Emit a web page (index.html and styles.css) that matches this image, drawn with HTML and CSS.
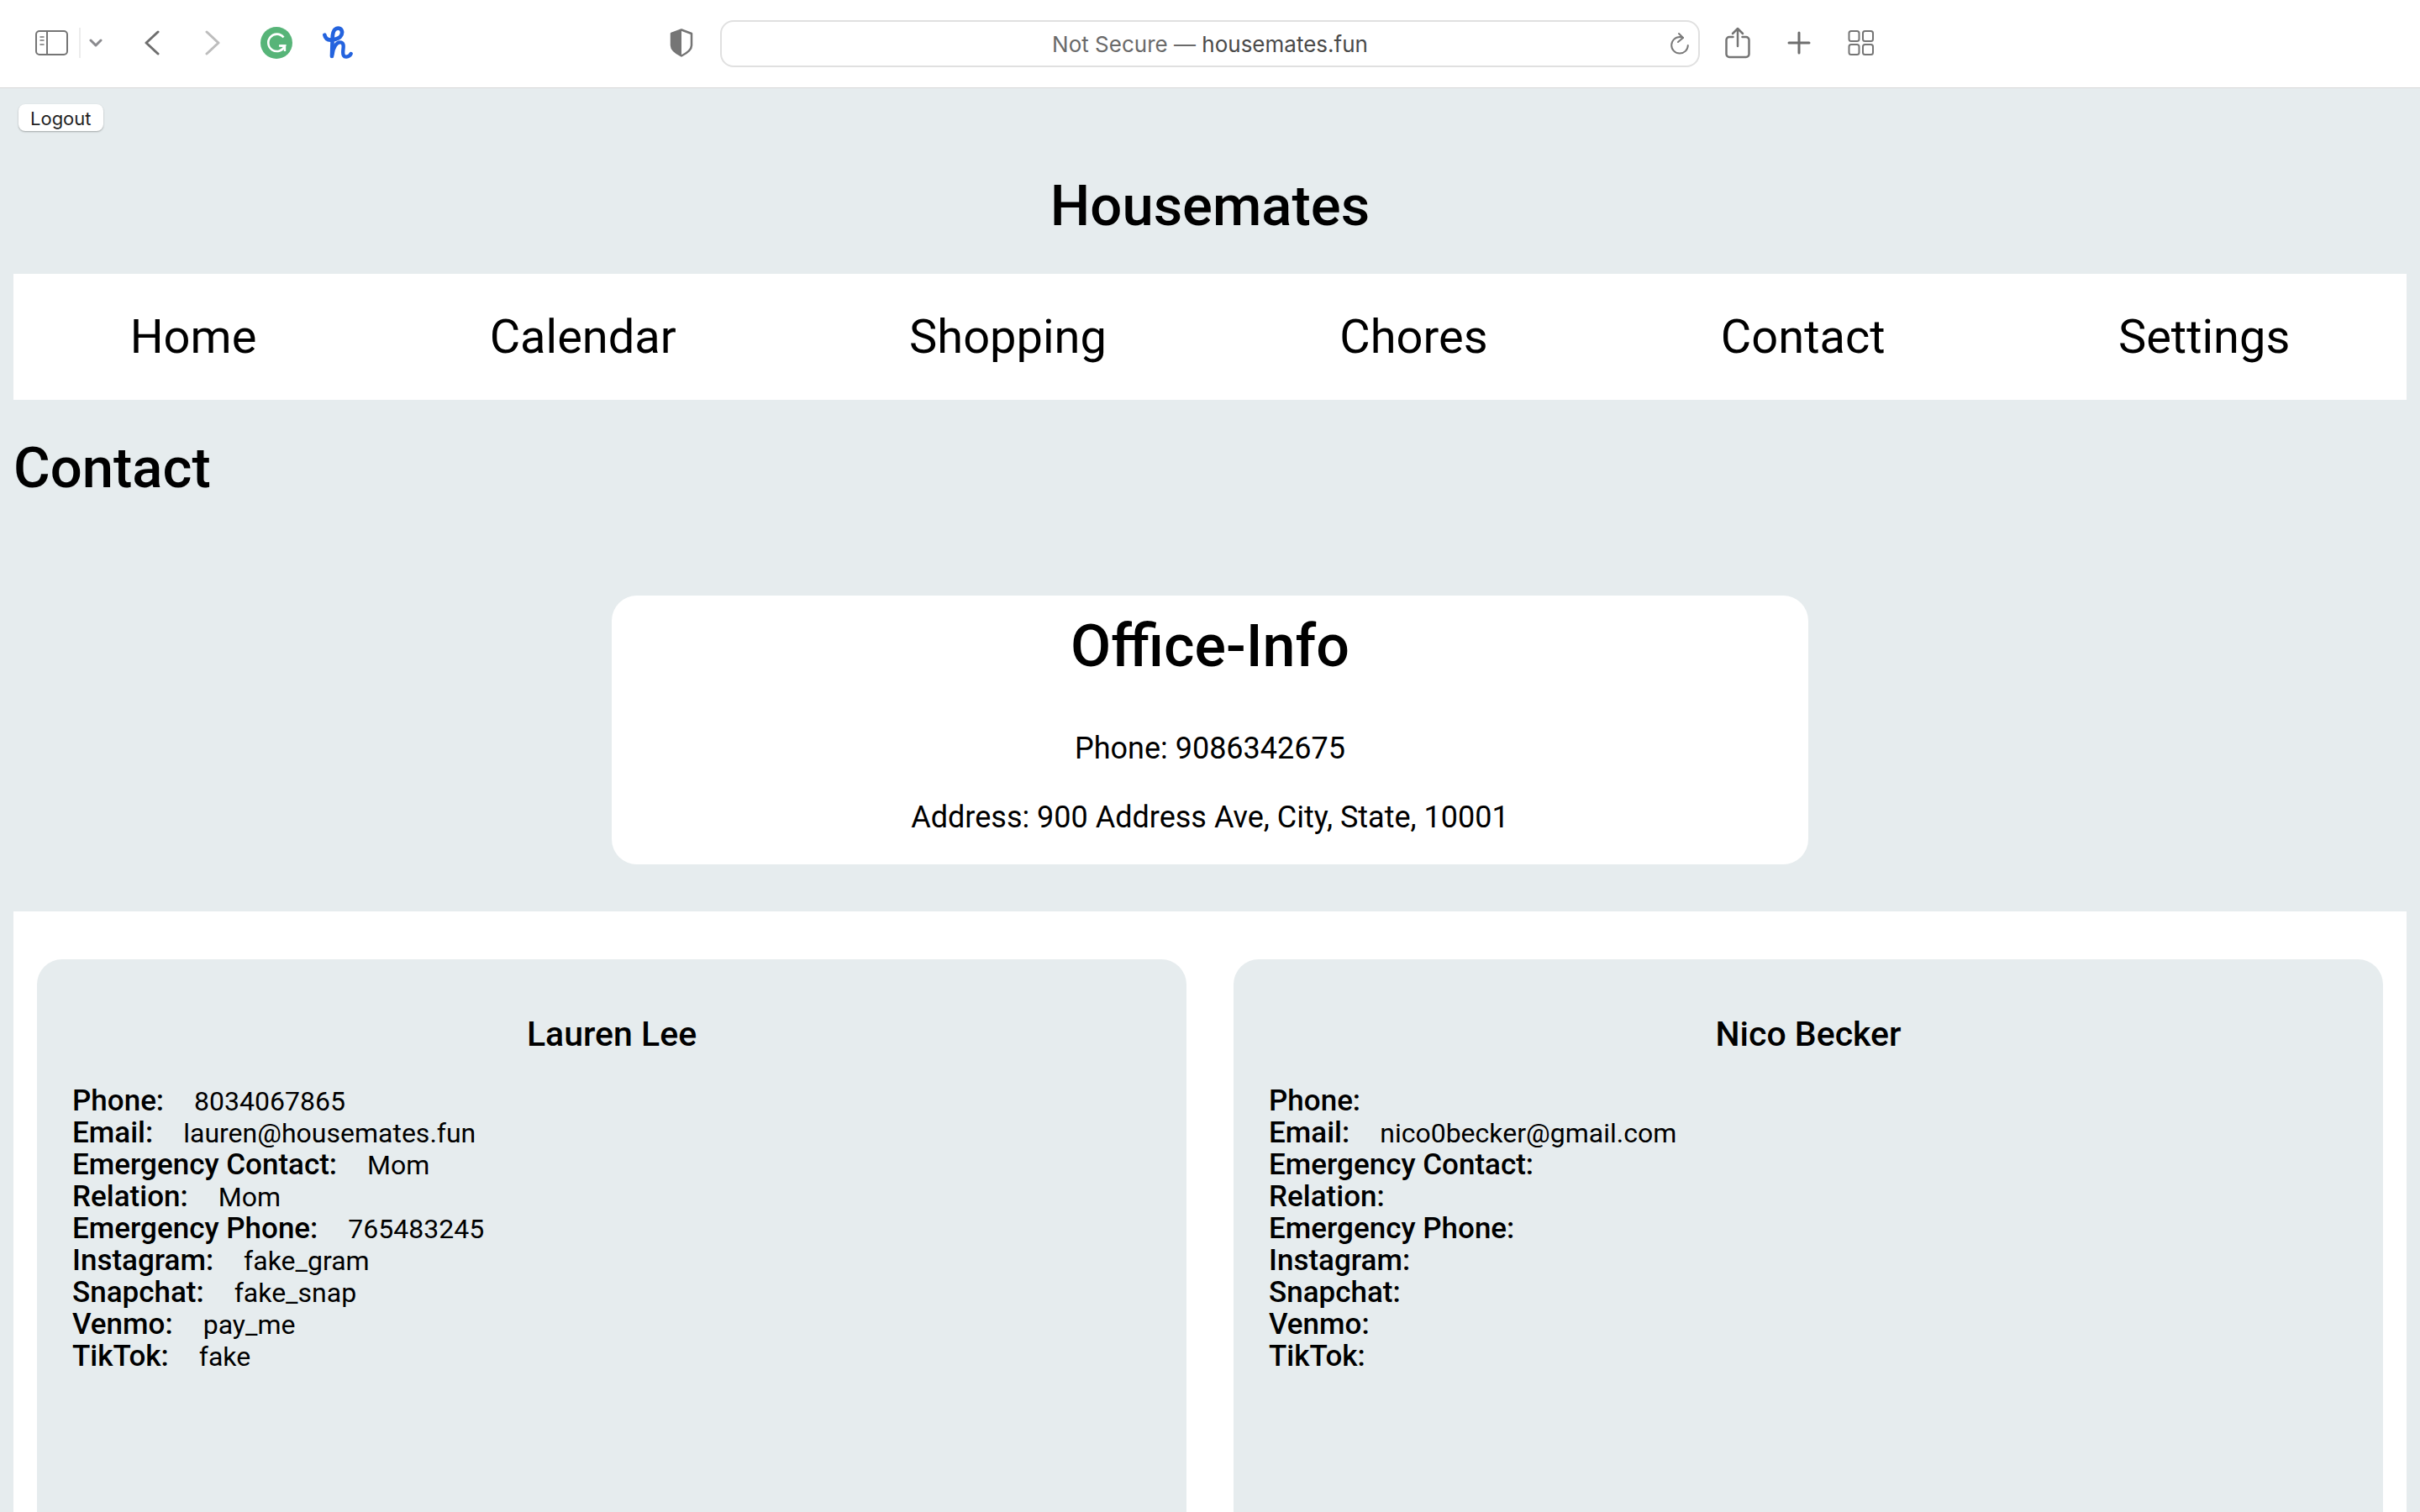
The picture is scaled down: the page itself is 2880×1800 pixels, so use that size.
FILE: index.html
```html
<!DOCTYPE html>
<html lang="en">
<head>
<meta charset="utf-8">
<title>Housemates</title>
<link rel="stylesheet" href="styles.css">
</head>
<body>
<div class="window">
  <div class="toolbar">
    <div class="toolbar-left">
      <button class="tool" type="button" aria-label="Sidebar">
        <svg width="40" height="32" viewBox="0 0 40 32" fill="none" stroke="#757575" stroke-width="2">
          <rect x="1" y="2" width="37" height="28" rx="4"/>
          <path d="M14 2v28"/>
          <path d="M6 9h4M6 13h4M6 18h4" stroke-linecap="round" stroke-width="1.5"/>
        </svg>
      </button>
      <span class="divider"></span>
      <button class="tool tool-menu" type="button" aria-label="Tab groups">
        <svg width="16" height="12" viewBox="0 0 16 12" fill="none" stroke="#8a8a8e" stroke-width="3" stroke-linecap="round" stroke-linejoin="round"><path d="M2 3l6 6 6-6"/></svg>
      </button>
      <button class="tool tool-back" type="button" aria-label="Back">
        <svg width="18" height="30" viewBox="0 0 18 30" fill="none" stroke="#6e6e6e" stroke-width="3" stroke-linecap="round" stroke-linejoin="round"><path d="M16 2L2 15l14 13"/></svg>
      </button>
      <button class="tool tool-forward" type="button" aria-label="Forward">
        <svg width="18" height="30" viewBox="0 0 18 30" fill="none" stroke="#bdbdbd" stroke-width="3" stroke-linecap="round" stroke-linejoin="round"><path d="M2 2l14 13L2 28"/></svg>
      </button>
      <button class="tool tool-grammar" type="button" aria-label="Grammar checker">
        <svg width="38" height="38" viewBox="0 0 38 38" fill="none"><circle cx="19" cy="19" r="19" fill="#57b478"/><path d="M27.5 12.5A10.2 10.2 0 1 0 29 22.500H23.500" stroke="#fff" stroke-width="2.600"/><path d="M29 21.500v7.500M22 22.500h8" stroke="#fff" stroke-width="2.400"/></svg>
      </button>
      <button class="tool tool-coupons" type="button" aria-label="Coupons">
        <svg width="36" height="40" viewBox="1150 96 108 120" fill="none" stroke="#2463de" stroke-linecap="round" stroke-linejoin="round">
          <path d="M1157 128C1160 143 1172 148 1188 145C1210 141 1221 130 1219 116C1217 103 1203 101 1194 108C1186 115 1185 128 1185 142L1183 204" stroke-width="14"/>
          <path d="M1185 196C1188 172 1199 154 1212 154C1226 154 1225 168 1223 182C1221 201 1226 207 1235 206C1243 205 1248 201 1251 195" stroke-width="13"/>
        </svg>
      </button>
      <button class="tool tool-privacy" type="button" aria-label="Privacy report">
        <svg width="28" height="34" viewBox="0 0 28 34"><path d="M14 1.500L26 6v14c0 6-6 9.500-12 12.500C8 29.500 2 26 2 20V6z" fill="none" stroke="#757575" stroke-width="2.500" stroke-linejoin="round"/><path d="M14 1.500L2 6v14c0 6 6 9.500 12 12.500z" fill="#757575"/></svg>
      </button>
    </div>
    <div class="address">
      <p class="address-text">Not Secure — <span class="host">housemates.fun</span></p>
      <button class="tool reload" type="button" aria-label="Reload">
        <svg width="24" height="28" viewBox="0 0 24 28" fill="none" stroke="#7a7a7a" stroke-width="2" stroke-linecap="round" stroke-linejoin="round"><path d="M12 6A9.800 9.800 0 1 0 21.800 16"/><path d="M11 2l5 5-6 5"/><path d="M12 6l4 1"/></svg>
      </button>
    </div>
    <div class="toolbar-right">
      <button class="tool" type="button" aria-label="Share">
        <svg width="30" height="38" viewBox="0 0 30 38" fill="none" stroke="#757575" stroke-width="2.500" stroke-linecap="round" stroke-linejoin="round"><path d="M9.500 12H5a3.500 3.500 0 0 0-3.500 3.500v17A3.500 3.500 0 0 0 5 36h20a3.500 3.500 0 0 0 3.500-3.500v-17A3.500 3.500 0 0 0 25 12h-4.500"/><path d="M15 23V2M9 8l6-6 6 6"/></svg>
      </button>
      <button class="tool" type="button" aria-label="New tab">
        <svg width="28" height="28" viewBox="0 0 28 28" fill="none" stroke="#6e6e6e" stroke-width="3" stroke-linecap="round"><path d="M14 2v24M2 14h24"/></svg>
      </button>
      <button class="tool" type="button" aria-label="Tab overview">
        <svg width="32" height="32" viewBox="0 0 32 32" fill="none" stroke="#757575" stroke-width="2"><rect x="1.500" y="2" width="12" height="12" rx="2.500"/><rect x="18" y="2" width="12" height="12" rx="2.500"/><rect x="1.500" y="18" width="12" height="12" rx="2.500"/><rect x="18" y="18" width="12" height="12" rx="2.500"/></svg>
      </button>
    </div>
  </div>

  <div class="page">
    <header>
      <button class="logout" type="button">Logout</button>
      <h1 class="title">Housemates</h1>
      <nav class="nav">
        <a href="#home">Home</a>
        <a href="#calendar">Calendar</a>
        <a href="#shopping">Shopping</a>
        <a href="#chores">Chores</a>
        <a href="#contact">Contact</a>
        <a href="#settings">Settings</a>
      </nav>
    </header>
    <main>
      <h2 class="heading">Contact</h2>
      <section class="office">
        <h3 class="office-title">Office-Info</h3>
        <p>Phone: 9086342675</p>
        <p>Address: 900 Address Ave, City, State, 10001</p>
      </section>
      <section class="people">
        <article class="person">
          <h4 class="name">Lauren Lee</h4>
          <dl class="details">
            <div class="row"><dt>Phone:</dt><dd>8034067865</dd></div>
            <div class="row"><dt>Email:</dt><dd>lauren@housemates.fun</dd></div>
            <div class="row"><dt>Emergency Contact:</dt><dd>Mom</dd></div>
            <div class="row"><dt>Relation:</dt><dd>Mom</dd></div>
            <div class="row"><dt>Emergency Phone:</dt><dd>765483245</dd></div>
            <div class="row"><dt>Instagram:</dt><dd>fake_gram</dd></div>
            <div class="row"><dt>Snapchat:</dt><dd>fake_snap</dd></div>
            <div class="row"><dt>Venmo:</dt><dd>pay_me</dd></div>
            <div class="row"><dt>TikTok:</dt><dd>fake</dd></div>
          </dl>
        </article>
        <article class="person">
          <h4 class="name">Nico Becker</h4>
          <dl class="details">
            <div class="row"><dt>Phone:</dt><dd></dd></div>
            <div class="row"><dt>Email:</dt><dd>nico0becker@gmail.com</dd></div>
            <div class="row"><dt>Emergency Contact:</dt><dd></dd></div>
            <div class="row"><dt>Relation:</dt><dd></dd></div>
            <div class="row"><dt>Emergency Phone:</dt><dd></dd></div>
            <div class="row"><dt>Instagram:</dt><dd></dd></div>
            <div class="row"><dt>Snapchat:</dt><dd></dd></div>
            <div class="row"><dt>Venmo:</dt><dd></dd></div>
            <div class="row"><dt>TikTok:</dt><dd></dd></div>
          </dl>
        </article>
      </section>
    </main>
  </div>
</div>
</body>
</html>
```

FILE: styles.css
```css
* {
  box-sizing: border-box;
}

body {
  margin: 0;
  background: #e6ecee;
  color: #000;
  font-family: Roboto, "Liberation Sans", sans-serif;
}

h1, h2, h3, h4, p, dl, dd {
  margin: 0;
}

.window {
  display: flex;
  flex-direction: column;
  height: 100vh;
  overflow: hidden;
}

/* Browser toolbar */
.toolbar {
  flex: none;
  display: grid;
  grid-template-columns: 1fr 40.5% 1fr;
  align-items: center;
  height: 105px;
  border-bottom: 1px solid #d8d8d8;
  background: #fff;
  font-family: Inter, "Liberation Sans", sans-serif;
}

.toolbar-left,
.toolbar-right {
  display: flex;
  align-items: center;
  padding-bottom: 2px;
}

.toolbar-left {
  padding-left: 42px;
  padding-right: 32px;
}

.toolbar-right {
  gap: 44px;
  padding-left: 30px;
}

.tool {
  display: block;
  padding: 0;
  border: 0;
  background: none;
}

.tool svg {
  display: block;
}

.divider {
  width: 2px;
  height: 36px;
  margin-left: 12px;
  background: #ececec;
}

.tool-menu {
  margin-left: 10px;
}

.tool-back {
  margin-left: 50px;
}

.tool-forward {
  margin-left: 54px;
}

.tool-grammar {
  margin-left: 48px;
}

.tool-coupons {
  margin-left: 36px;
}

.tool-privacy {
  margin-left: auto;
}

.address {
  display: grid;
  grid-template-columns: 24px 1fr 24px;
  align-items: center;
  height: 56px;
  padding: 0 10px;
  border: 2px solid #e0e0e0;
  border-radius: 16px;
}

.address-text {
  grid-column: 2;
  padding-top: 2px;
  color: #6a6a6a;
  font-size: 26px;
  line-height: 32px;
  text-align: center;
}

.host {
  color: #4a4a4a;
}

/* Site */
.page {
  flex: 1;
  min-height: 0;
  padding: 19px 16px 0;
  overflow: hidden;
}

.logout {
  display: block;
  height: 32px;
  margin-left: 6px;
  padding: 3px 14px 0;
  border: 0;
  border-radius: 8px;
  background: #fff;
  box-shadow: 0 1px 2px rgba(0, 0, 0, 0.3);
  color: #1f1f1f;
  font-family: Inter, "Liberation Sans", sans-serif;
  font-size: 22px;
  line-height: 29px;
}

.title,
.heading {
  font-size: 67px;
  font-weight: 500;
  line-height: 76px;
}

.title {
  margin: 51px 0 43px;
  text-align: center;
}

.nav {
  display: flex;
  justify-content: space-around;
  padding: 42px 0;
  background: #fff;
  font-size: 56px;
  line-height: 66px;
}

.nav a {
  color: #000;
  text-decoration: none;
}

.heading {
  margin: 43px 0 114px;
}

.office {
  width: 50%;
  margin: 0 auto 56px;
  padding: 19px 0 35px;
  border-radius: 30px;
  background: #fff;
  font-size: 36px;
  line-height: 42px;
  text-align: center;
}

.office-title {
  margin-bottom: 60px;
  font-size: 70px;
  font-weight: 500;
  line-height: 82px;
}

.office p + p {
  margin-top: 40px;
}

.people {
  display: grid;
  grid-template-columns: 1fr 1fr;
  gap: 56px;
  padding: 57px 28px;
  background: #fff;
}

.person {
  min-height: 800px;
  padding: 66px 42px;
  border-radius: 30px;
  background: #e6ecee;
}

.name {
  margin-bottom: 38px;
  font-size: 41px;
  font-weight: 500;
  line-height: 46px;
  text-align: center;
}

.row {
  display: flex;
  align-items: baseline;
  gap: 36px;
  min-height: 38px;
  font-size: 32px;
  line-height: 38px;
}

.row dt {
  font-size: 35px;
  font-weight: 500;
  line-height: 36px;
}

/* Keeps a blank value on the same baseline as a filled one */
.row dd:empty::before {
  content: "\200b";
}
```
